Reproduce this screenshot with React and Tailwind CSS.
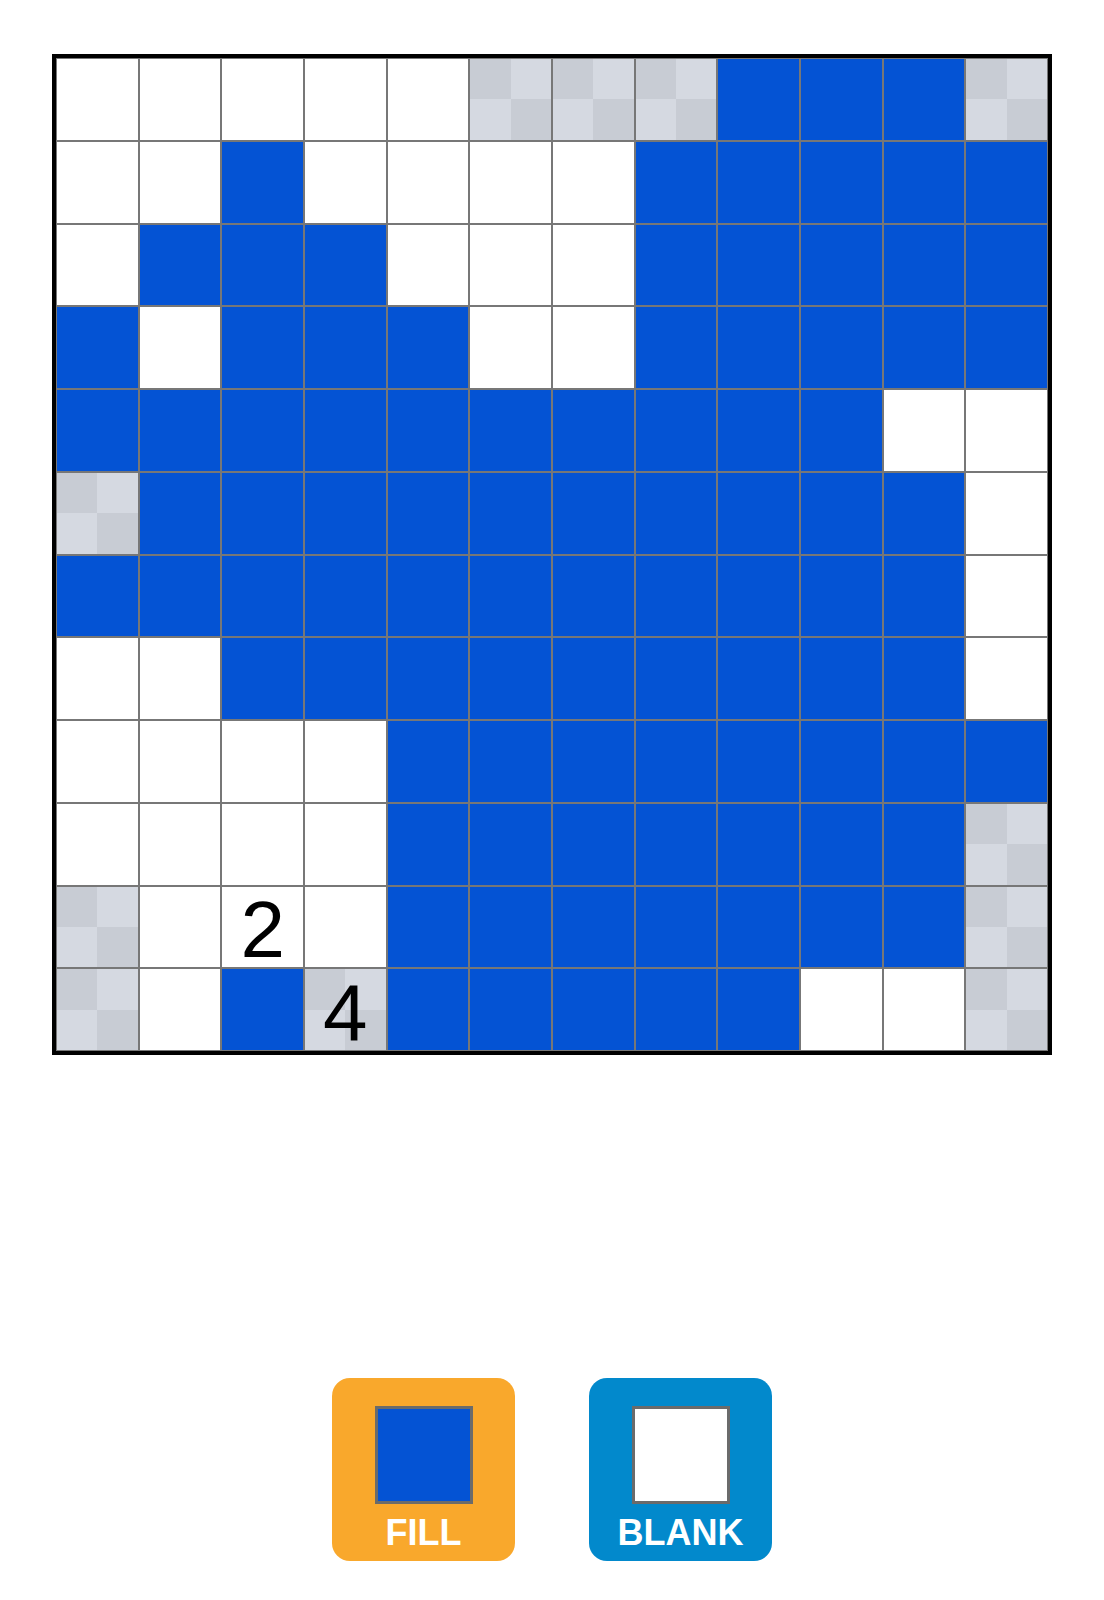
import React from 'react';

// F = filled, W = blank, X = unknown (checkered)
const BOARD = [
  'WWWWWXXXFFFX',
  'WWFWWWWFFFFF',
  'WFFFWWWFFFFF',
  'FWFFFWWFFFFF',
  'FFFFFFFFFFWW',
  'XFFFFFFFFFFW',
  'FFFFFFFFFFFW',
  'WWFFFFFFFFFW',
  'WWWWFFFFFFFF',
  'WWWWFFFFFFFX',
  'XWWWFFFFFFFX',
  'XWFXFFFFFWWX',
];

// clue numbers keyed by "row-col"
const CLUES = {
  '10-2': '2',
  '11-3': '4',
};

const Checker = () => (
  <div className="absolute inset-0 grid grid-cols-2 grid-rows-2">
    <div className="bg-[#c8ccd4]" />
    <div className="bg-[#d5d9e1]" />
    <div className="bg-[#d5d9e1]" />
    <div className="bg-[#c8ccd4]" />
  </div>
);

const Cell = ({ type, clue }) => {
  const bg = type === 'F' ? 'bg-[#0453d4]' : 'bg-white';
  return (
    <div className={`relative border border-[#777777] ${bg}`}>
      {type === 'X' && <Checker />}
      {clue && (
        <span className="absolute inset-0 flex items-center justify-center pt-[6px] text-[80px] leading-none text-black font-['Liberation_Sans',Arial,sans-serif]">
          {clue}
        </span>
      )}
    </div>
  );
};

const ToolButton = ({ label, bg, swatch }) => (
  <button
    className={`w-[183px] h-[183px] rounded-[18px] ${bg} flex flex-col items-center pt-[28px]`}
  >
    <div className={`w-[98px] h-[98px] border-[3px] border-[#6b6b6b] ${swatch}`} />
    <span className="mt-[9px] text-[36px] leading-[40px] font-bold text-white font-['Liberation_Sans',Arial,sans-serif]">
      {label}
    </span>
  </button>
);

export default function App() {
  return (
    <div className="min-h-screen bg-white flex flex-col items-center pt-[54px]">
      <div className="w-[1000px] h-[1001px] border-4 border-black grid grid-cols-12 grid-rows-12">
        {BOARD.map((row, r) =>
          row.split('').map((type, c) => (
            <Cell key={`${r}-${c}`} type={type} clue={CLUES[`${r}-${c}`]} />
          ))
        )}
      </div>

      <div className="mt-[323px] flex gap-[74px]">
        <ToolButton label="FILL" bg="bg-[#f9a82c]" swatch="bg-[#0453d4]" />
        <ToolButton label="BLANK" bg="bg-[#0289cc]" swatch="bg-white" />
      </div>
    </div>
  );
}
